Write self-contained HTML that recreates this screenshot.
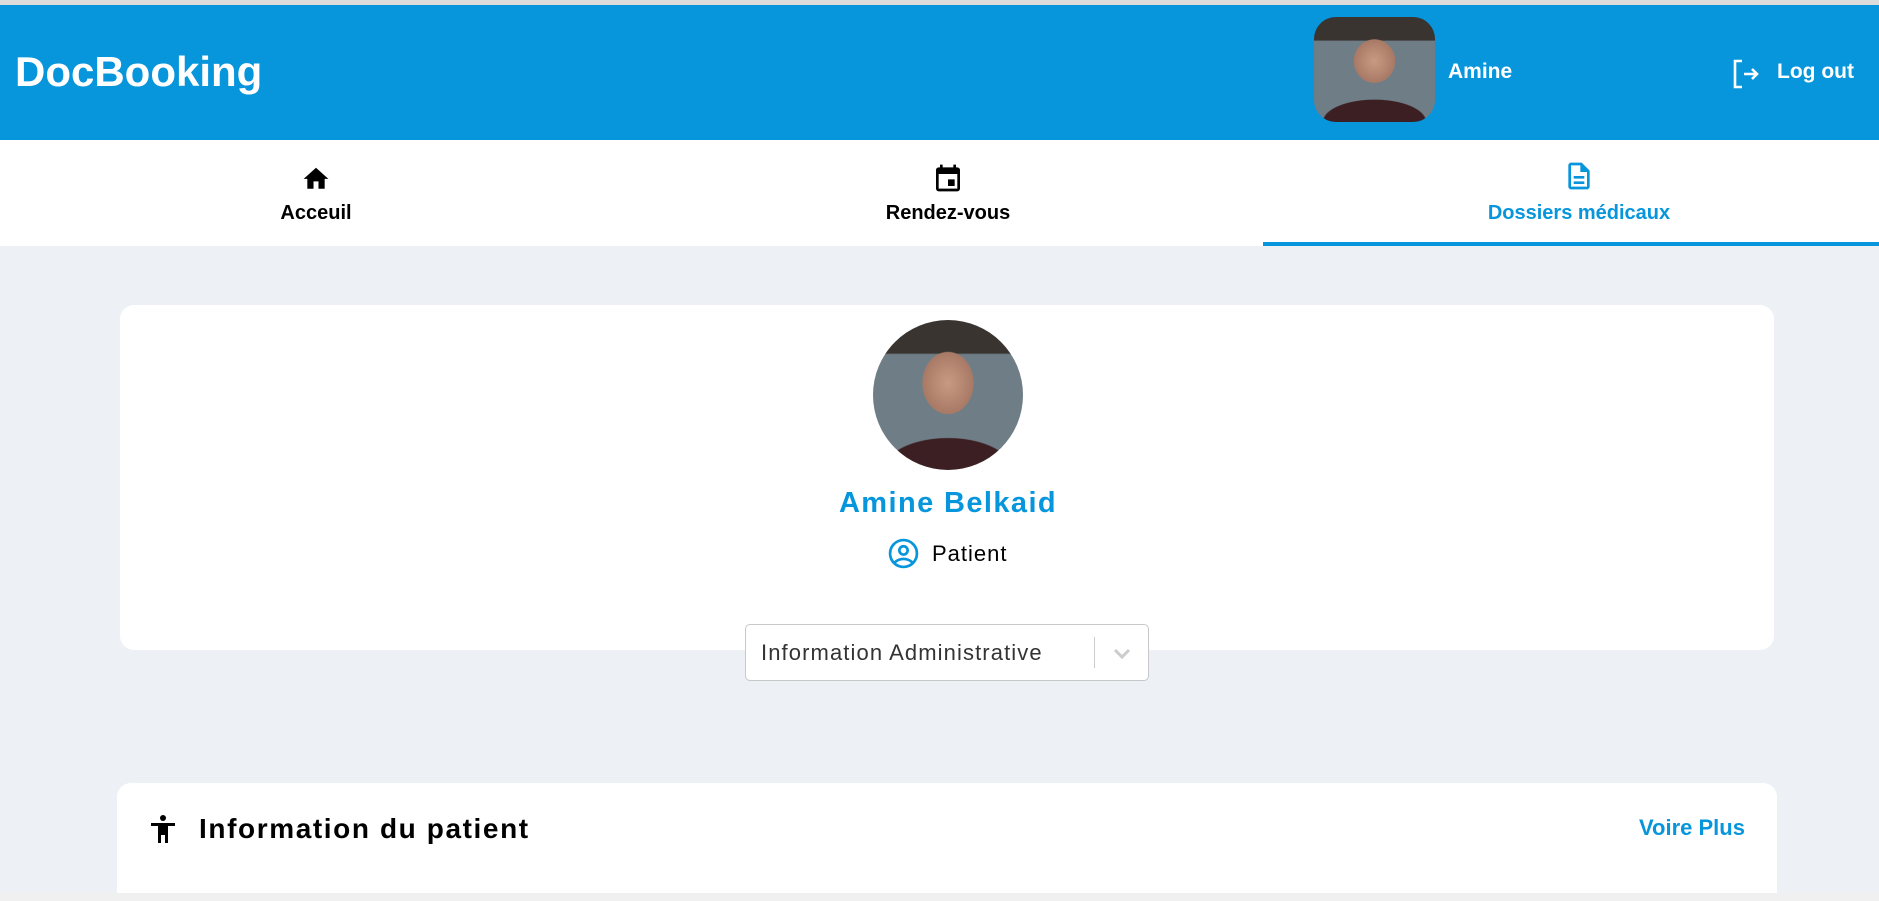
<!DOCTYPE html>
<html><head><meta charset="utf-8"><style>
*{margin:0;padding:0;box-sizing:border-box}
body{width:1879px;height:901px;overflow:hidden;background:#edf0f5;font-family:"Liberation Sans",sans-serif;position:relative}
.abs{position:absolute}
.top{left:0;top:0;width:1879px;height:5px;background:#dcdcdc}
.hdr{left:0;top:5px;width:1879px;height:135px;background:#0796dc}
.nav{left:0;top:140px;width:1879px;height:106px;background:#fff}
.card{background:#fff;border-radius:14px}
.face{background:radial-gradient(ellipse 28% 34% at 50% 42%,#c99a82 0%,#a87a66 60%,transparent 62%),linear-gradient(180deg,#3a3430 0%,#3a3430 22%,transparent 23%),radial-gradient(ellipse 60% 30% at 50% 100%,#3b1f22 0%,#3b1f22 70%,transparent 72%),#6f7d86}
</style></head><body>
<div class="abs top"></div>
<div class="abs hdr"></div>
<div class="abs" style="left:15px;top:48px;color:#fff;font-weight:bold;font-size:42px">DocBooking</div>
<div class="abs face" style="left:1314px;top:17px;width:121px;height:105px;border-radius:22px"></div>
<div class="abs" style="left:1448px;top:60px;color:#fff;font-weight:bold;font-size:21px">Amine</div>
<svg class="abs" style="left:1732px;top:59px" width="28" height="30" viewBox="0 0 28 30" fill="none" stroke="#fff" stroke-width="2.6"><path d="M10 2H3v26h7M12 15h13M20 10l5 5-5 5"/></svg>
<div class="abs" style="left:1777px;top:60px;color:#fff;font-weight:bold;font-size:21px">Log out</div>
<div class="abs nav"></div>
<svg class="abs" style="left:301px;top:164px" width="30" height="26" viewBox="0 0 24 21"><path d="M10 20v-6h4v6h5v-8h3L12 3 2 12h3v8z" fill="#000"/></svg>
<div class="abs" style="left:216px;top:202px;width:200px;text-align:center;font-size:20px;font-weight:bold;color:#000">Acceuil</div>
<svg class="abs" style="left:932px;top:162px" width="32" height="32" viewBox="0 0 24 24"><path d="M19 4h-1V2h-2v2H8V2H6v2H5a2 2 0 0 0-2 2v14a2 2 0 0 0 2 2h14a2 2 0 0 0 2-2V6a2 2 0 0 0-2-2zm0 16H5V9h14zM12 13h5v5h-5z" fill="#000"/></svg>
<div class="abs" style="left:848px;top:202px;width:200px;text-align:center;font-size:20px;font-weight:bold;color:#000">Rendez-vous</div>
<svg class="abs" style="left:1563px;top:160px" width="32" height="32" viewBox="0 0 24 24"><path d="M8 16h8v2H8zm0-4h8v2H8zm6-10H6a2 2 0 0 0-2 2v16a2 2 0 0 0 2 2h12a2 2 0 0 0 2-2V8zm4 18H6V4h7v5h5z" fill="#0796dc"/></svg>
<div class="abs" style="left:1429px;top:202px;width:300px;text-align:center;font-size:20px;font-weight:bold;color:#0796dc">Dossiers médicaux</div>
<div class="abs" style="left:1263px;top:242px;width:616px;height:4px;background:#0796dc"></div>

<div class="abs card" style="left:120px;top:305px;width:1654px;height:345px"></div>
<div class="abs face" style="left:873px;top:320px;width:150px;height:150px;border-radius:50%"></div>
<div class="abs" style="left:698px;top:487px;width:500px;text-align:center;font-weight:bold;font-size:29px;color:#0796dc;letter-spacing:1.4px">Amine Belkaid</div>
<svg class="abs" style="left:888px;top:538px" width="31" height="31" viewBox="0 0 30 30" fill="none" stroke="#0796dc" stroke-width="2.6"><circle cx="15" cy="15" r="13"/><circle cx="15" cy="12" r="4"/><path d="M6 24c5-5 13-5 18 0"/></svg>
<div class="abs" style="left:932px;top:541px;font-size:22px;color:#000;letter-spacing:1px">Patient</div>
<div class="abs" style="left:745px;top:624px;width:404px;height:57px;background:#fff;border:1px solid #c8c8c8;border-radius:5px"></div>
<div class="abs" style="left:761px;top:640px;font-size:22px;color:#333;letter-spacing:1.1px">Information Administrative</div>
<div class="abs" style="left:1094px;top:637px;width:1px;height:31px;background:#ccc"></div>
<svg class="abs" style="left:1112px;top:647px" width="20" height="14" viewBox="0 0 20 14" fill="none" stroke="#ccc" stroke-width="3"><path d="M3 3l7 7 7-7"/></svg>

<div class="abs" style="left:0;top:893px;width:1879px;height:8px;background:#f0f0f0"></div>
<div class="abs card" style="left:117px;top:783px;width:1660px;height:110px;border-radius:14px 14px 0 0"></div>
<svg class="abs" style="left:150px;top:814px" width="26" height="30" viewBox="0 0 26 30"><circle cx="13" cy="4" r="3" fill="#000"/><path d="M1 9h24v3h-7v17h-3v-8h-4v8H8V12H1z" fill="#000"/></svg>
<div class="abs" style="left:199px;top:813px;font-weight:bold;font-size:28px;color:#000;letter-spacing:1.6px">Information du patient</div>
<div class="abs" style="left:1639px;top:815px;font-size:22px;color:#0796dc;font-weight:bold">Voire Plus</div>
</body></html>
